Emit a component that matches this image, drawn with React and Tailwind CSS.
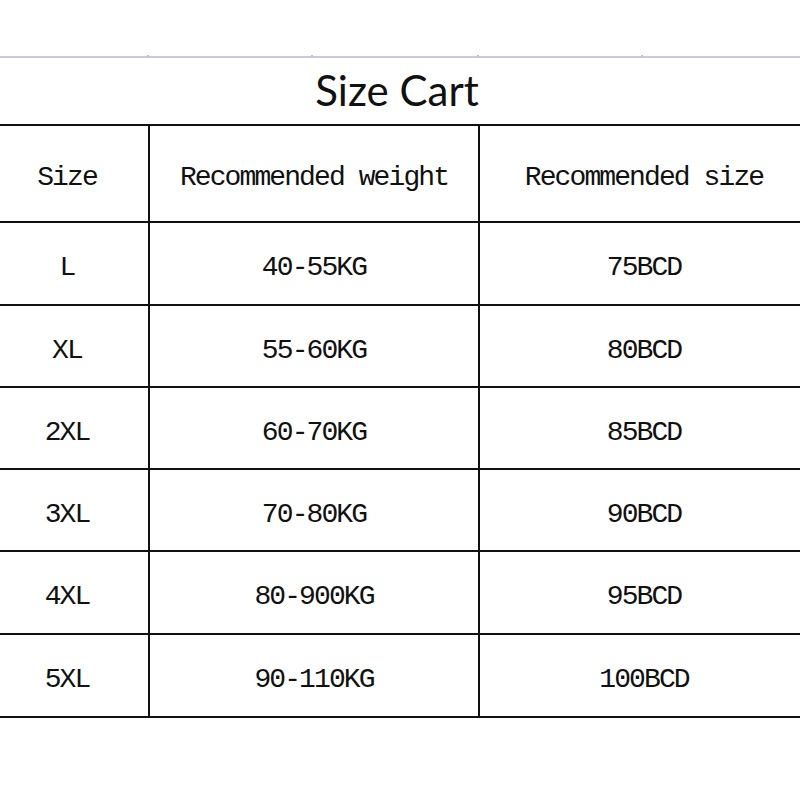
const rows = [
  ['L', '40-55KG', '75BCD', 'h-[81px]'],
  ['XL', '55-60KG', '80BCD', 'h-[80px]'],
  ['2XL', '60-70KG', '85BCD', 'h-[80px]'],
  ['3XL', '70-80KG', '90BCD', 'h-[80px]'],
  ['4XL', '80-900KG', '95BCD', 'h-[81px]'],
  ['5XL', '90-110KG', '100BCD', 'h-[81px]'],
]

const mono = "font-['SimSun','Liberation_Mono',monospace] text-[28px] tracking-[-1.9px] text-[#111] pt-[9px]"

const Cell = ({ children, first, h }) => (
  <div
    className={`flex items-center justify-center ${h} ${first ? '' : 'border-l-2 border-[#111]'} ${mono}`}
  >
    {children}
  </div>
)

export default function App() {
  return (
    <div className="w-[800px] h-[800px] overflow-hidden bg-white">
      <div className="h-[56px]" />
      {/* spreadsheet gridline above the title */}
      <div className="relative h-[2px] bg-[#c9cbd8]">
        <span className="absolute left-[147px] -top-[1px] w-[2px] h-[2px] bg-[#c0c0c8]" />
        <span className="absolute left-[311px] -top-[1px] w-[2px] h-[2px] bg-[#c0c0c8]" />
        <span className="absolute left-[477px] -top-[1px] w-[2px] h-[2px] bg-[#c0c0c8]" />
        <span className="absolute left-[641px] -top-[1px] w-[2px] h-[2px] bg-[#c0c0c8]" />
      </div>

      <div className="-ml-[14px] w-[822px]">
        <div className="h-[66px] flex items-center justify-center font-['Lato','Open_Sans',sans-serif] text-[42px] text-[#111] pb-[2px]">
          Size Cart
        </div>
        <div className="border-t-2 border-b-2 border-[#111]">
          <div className="grid grid-cols-[162px_330px_330px] border-b-2 border-[#111]">
            <Cell first h="h-[95px]">Size</Cell>
            <Cell h="h-[95px]">Recommended weight</Cell>
            <Cell h="h-[95px]">Recommended size</Cell>
          </div>
          {rows.map((r, i) => (
            <div
              key={r[0]}
              className={`grid grid-cols-[162px_330px_330px] ${i < rows.length - 1 ? 'border-b-2 border-[#111]' : ''}`}
            >
              <Cell first h={r[3]}>{r[0]}</Cell>
              <Cell h={r[3]}>{r[1]}</Cell>
              <Cell h={r[3]}>{r[2]}</Cell>
            </div>
          ))}
        </div>
      </div>
    </div>
  )
}
